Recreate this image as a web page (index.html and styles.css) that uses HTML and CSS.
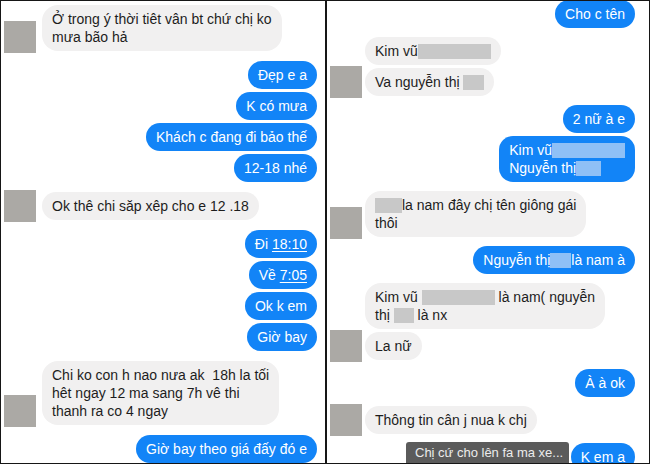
FILE: index.html
```html
<!DOCTYPE html>
<html>
<head>
  <link rel="stylesheet" href="styles.css">
</head>
<body>
  <div class="frame">
    <div class="panel left">
      <div class="row in">
        <div class="avatar"></div>
        <div class="bubble">Ở trong ý thời tiêt vân bt chứ chị ko<br>mưa bão hả</div>
      </div>
      <div class="row out new"><div class="bubble">Đẹp e a</div></div>
      <div class="row out"><div class="bubble">K có mưa</div></div>
      <div class="row out"><div class="bubble">Khách c đang đi bảo thế</div></div>
      <div class="row out"><div class="bubble">12-18 nhé</div></div>
      <div class="row in new">
        <div class="avatar"></div>
        <div class="bubble">Ok thê chi săp xêp cho e 12 .18</div>
      </div>
      <div class="row out new"><div class="bubble">Đi <u>18:10</u></div></div>
      <div class="row out"><div class="bubble">Về <u>7:05</u></div></div>
      <div class="row out"><div class="bubble">Ok k em</div></div>
      <div class="row out"><div class="bubble">Giờ bay</div></div>
      <div class="row in new">
        <div class="avatar"></div>
        <div class="bubble">Chi ko con h nao nưa ak&nbsp; 18h la tối<br>hêt ngay 12 ma sang 7h vê thi<br>thanh ra co 4 ngay</div>
      </div>
      <div class="row out new"><div class="bubble">Giờ bay theo giá đấy đó e</div></div>
    </div>

    <div class="panel right">
      <div class="row out top"><div class="bubble">Cho c tên</div></div>
      <div class="row in new">
        <div class="avatar-space"></div>
        <div class="bubble">Kim vũ<span class="hide w73"></span></div>
      </div>
      <div class="row in">
        <div class="avatar"></div>
        <div class="bubble">Va nguyễn thị <span class="hide w21"></span></div>
      </div>
      <div class="row out new"><div class="bubble">2 nữ à e</div></div>
      <div class="row out"><div class="bubble">Kim vũ<span class="hide w73"></span><br>Nguyễn thị<span class="hide w25"></span></div></div>
      <div class="row in new">
        <div class="avatar"></div>
        <div class="bubble"><span class="hide w27"></span>la nam đây chị tên giông gái<br>thôi</div>
      </div>
      <div class="row out new"><div class="bubble">Nguyễn thị<span class="hide w21"></span>là nam à</div></div>
      <div class="row in new">
        <div class="avatar-space"></div>
        <div class="bubble">Kim vũ <span class="hide w73"></span> là nam( nguyễn<br>thị <span class="hide w20"></span> là nx</div>
      </div>
      <div class="row in">
        <div class="avatar"></div>
        <div class="bubble">La nữ</div>
      </div>
      <div class="row out new"><div class="bubble">À à ok</div></div>
      <div class="row in new">
        <div class="avatar"></div>
        <div class="bubble">Thông tin cân j nua k chj</div>
      </div>
      <div class="row out new"><div class="bubble">K em a</div></div>

      <div class="toast">
        <span>Chị cứ cho lên fa ma xe...</span>
        <svg width="16" height="16" viewBox="0 0 16 16">
          <circle cx="8" cy="8" r="7" fill="none" stroke="#e6e6e6" stroke-width="1.2"/>
          <path d="M4.8 6.8 L8 10 L11.2 6.8" fill="none" stroke="#e6e6e6" stroke-width="1.2"/>
        </svg>
      </div>
    </div>
  </div>
</body>
</html>
```

FILE: styles.css
```css
body {
  margin: 0;
  background: #fff;
  font-family: 'Liberation Sans', Arial, sans-serif;
}

.frame {
  width: 650px;
  height: 464px;
  box-sizing: border-box;
  border: 1px solid #161616;
  display: flex;
  overflow: hidden;
}

.panel {
  position: relative;
  height: 100%;
  overflow: hidden;
  display: flex;
  flex-direction: column;
  box-sizing: border-box;
}

.left {
  width: 324px;
  padding: 4px 8px 0 3px;
}

.right {
  flex: 1;
  border-left: 2px solid #161616;
  padding: 0 14px 0 3px;
}

.row {
  display: flex;
  align-items: flex-end;
  flex-shrink: 0;
  margin-top: 3px;
}

.left .row.new {
  margin-top: 10px;
}

.right .row.new {
  margin-top: 9px;
}

.row:first-child {
  margin-top: 0;
}

.right .row.top {
  margin-top: -1px;
}

.row.out {
  justify-content: flex-end;
}

/* avatar hangs 2px below the bubble without making the row taller */
.avatar,
.avatar-space {
  width: 32px;
  height: 32px;
  flex-shrink: 0;
  margin-top: -4px;
  margin-bottom: -2px;
}

.avatar-space {
  height: 0;
  margin: 0;
}

.avatar {
  background: #aba9a5;
}

.left .avatar,
.left .avatar-space {
  margin-right: 6px;
}

.right .avatar,
.right .avatar-space {
  margin-right: 3px;
}

.bubble {
  font-size: 14px;
  line-height: 18px;
  padding: 5px 10px;
  border-radius: 14px;
  white-space: nowrap;
}

.in .bubble {
  background: #f1f0f0;
  color: #1d1d1d;
  border-radius: 16px;
}

.out .bubble {
  background: #1284f7;
  color: #fff;
}

.out .bubble u {
  text-decoration-thickness: 1px;
  text-underline-offset: 2px;
}

.hide {
  display: inline-block;
  height: 15px;
  vertical-align: -3px;
  background: #c8c8c8;
}

.out .hide {
  background: #8fc0f6;
}

.w20 { width: 20px; }
.w21 { width: 21px; }
.w25 { width: 25px; }
.w27 { width: 27px; }
.w73 { width: 73px; }

.toast {
  position: absolute;
  left: 79px;
  bottom: 0;
  width: 163px;
  height: 21px;
  box-sizing: border-box;
  padding: 0 7px 0 9px;
  background: #5b5b5b;
  border-radius: 3px 3px 0 0;
  color: #ececec;
  font-size: 13px;
  white-space: nowrap;
  display: flex;
  align-items: center;
  justify-content: space-between;
}

.toast svg {
  display: block;
}
```
